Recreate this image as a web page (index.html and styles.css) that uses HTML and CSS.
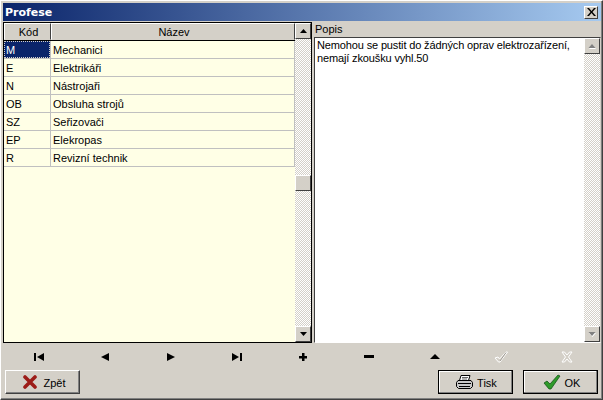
FILE: index.html
```html
<!DOCTYPE html>
<html lang="cs">
<head>
    <meta charset="UTF-8">
    <title>Profese</title>
    <link rel="stylesheet" href="styles.css">
</head>
<body>
    <div class="window">
        <div class="titlebar">
            <span class="title">Profese</span>
            <button class="close"><svg width="9" height="8" viewBox="0 0 9 8"><path d="M0 0h2l2.500 3L7 0h2L5.500 4 9 8H7L4.500 5 2 8H0l3.500-4z"/></svg></button>
        </div>

        <div class="main">
            <div class="grid">
                <div class="grid-body">
                    <div class="row head">
                        <div class="cell code">Kód</div>
                        <div class="cell name">Název</div>
                    </div>
                    <div class="row">
                        <div class="cell code selected"><span class="focus">M</span></div>
                        <div class="cell name">Mechanici</div>
                    </div>
                    <div class="row"><div class="cell code">E</div><div class="cell name">Elektrikáři</div></div>
                    <div class="row"><div class="cell code">N</div><div class="cell name">Nástrojaři</div></div>
                    <div class="row"><div class="cell code">OB</div><div class="cell name">Obsluha strojů</div></div>
                    <div class="row"><div class="cell code">SZ</div><div class="cell name">Seřizovači</div></div>
                    <div class="row"><div class="cell code">EP</div><div class="cell name">Elekropas</div></div>
                    <div class="row"><div class="cell code">R</div><div class="cell name">Revizní technik</div></div>
                </div>
                <div class="scrollbar">
                    <div class="arrow"><svg width="7" height="4" viewBox="0 0 7 4"><path d="M3.500 0L7 4H0z"/></svg></div>
                    <div class="track">
                        <div class="thumb"></div>
                    </div>
                    <div class="arrow"><svg width="7" height="4" viewBox="0 0 7 4"><path d="M0 0h7L3.500 4z"/></svg></div>
                </div>
            </div>

            <div class="memo-wrap">
                <div class="memo-label">Popis</div>
                <div class="memo">
                    <div class="memo-text">Nemohou se pustit do žádných oprav elektrozařízení,<br>nemají zkoušku vyhl.50</div>
                    <div class="scrollbar disabled">
                        <div class="arrow"><svg width="9" height="5" viewBox="0 0 9 5"><path d="M4.500 1L8 5H1z" fill="#fff"/><path d="M4 0L7.500 4H.5z"/></svg></div>
                        <div class="track"></div>
                        <div class="arrow"><svg width="9" height="5" viewBox="0 0 9 5"><path d="M1 1h7L4.500 5z" fill="#fff"/><path d="M.5 0h7L4 4z"/></svg></div>
                    </div>
                </div>
            </div>
        </div>

        <div class="navigator">
            <div class="nav"><svg width="11" height="8" viewBox="0 0 11 8"><path d="M0 0h2v8H0zM3 4l7-4v8z"/></svg></div>
            <div class="nav"><svg width="8" height="8" viewBox="0 0 8 8"><path d="M0 4l8-4v8z"/></svg></div>
            <div class="nav"><svg width="8" height="8" viewBox="0 0 8 8"><path d="M0 0l8 4-8 4z"/></svg></div>
            <div class="nav"><svg width="11" height="8" viewBox="0 0 11 8"><path d="M0 0l7 4-7 4zM8 0h2v8H8z"/></svg></div>
            <div class="nav"><svg width="8" height="8" viewBox="0 0 8 8"><path d="M3 0h2.500v3H8v2.500H5.500V8H3V5.500H0V3h3z"/></svg></div>
            <div class="nav"><svg width="10" height="3" viewBox="0 0 10 3"><path d="M0 0h10v3H0z"/></svg></div>
            <div class="nav"><svg width="10" height="5" viewBox="0 0 10 5"><path d="M5 0l5 5H0z"/></svg></div>
            <div class="nav"><svg width="14" height="12" viewBox="0 0 14 12"><path d="M1 7l3-1 1.500 2L12 1h1.500L6 11H4.500z" fill="#d4d0c8" stroke="#fff"/><path d="M12 1.500L6 10" stroke="#a09c94" fill="none"/></svg></div>
            <div class="nav"><svg width="12" height="12" viewBox="0 0 12 12"><path d="M1 1h2.500L6 4l2.500-3H11L7.500 6 11 11H8.500L6 8l-2.500 3H1l3.500-5z" fill="#d4d0c8" stroke="#fff"/></svg></div>
        </div>

        <div class="actions">
            <button class="btn back">
                <svg width="14" height="14" viewBox="0 0 14 14"><path d="M2 2l10 10M12 2L2 12" stroke="#9c1c18" stroke-width="3.600" stroke-linecap="round" fill="none"/></svg>
                <span class="btn-text">Zpět</span>
            </button>
            <div class="actions-right">
                <button class="btn dark">
                    <svg width="17" height="15" viewBox="0 0 17 15"><path d="M5 .5h9l-1.500 5h-9z" fill="#fff" stroke="#000"/><path d="M2 5.500h13l1.500 2v4l-2 2h-12l-2-2v-4z" fill="#c8c8c8" stroke="#000"/><path d="M2 8.500h13M3 11.500h11" stroke="#000"/><path d="M6 2.500h6M6 4h5" stroke="#666"/></svg>
                    <span class="btn-text">Tisk</span>
                </button>
                <button class="btn dark">
                    <svg width="18" height="16" viewBox="0 0 18 16"><path d="M1 9l3-2 3 3 8-9 2 1-9 13H6z" fill="#2f9a2a" stroke="#0c4a10" stroke-width=".7"/></svg>
                    <span class="btn-text">OK</span>
                </button>
            </div>
        </div>
    </div>
</body>
</html>
```

FILE: styles.css
```css
html, body {
    margin: 0;
    padding: 0;
}
body {
    width: 603px;
    height: 400px;
    overflow: hidden;
    font-family: "Liberation Sans", Arial, sans-serif;
    font-size: 11px;
    color: #000;
    background-color: #d4d0c8;
}
.window {
    box-sizing: border-box;
    width: 603px;
    height: 400px;
    display: flex;
    flex-direction: column;
    padding: 2px 1px 0 2px;
    border: 1px solid;
    border-color: #fff #404040 #404040 #fff;
    box-shadow: inset -1px -1px 0 #808080;
}
.titlebar {
    height: 18px;
    flex-shrink: 0;
    display: flex;
    align-items: center;
    justify-content: space-between;
    padding: 0 3px 0 2px;
    background: linear-gradient(to right, #0a246a, #a6caf0);
}
.title {
    font-family: "DejaVu Sans", Verdana, sans-serif;
    font-weight: bold;
    font-size: 11px;
    color: #fff;
}
.close {
    width: 14px;
    height: 13px;
    padding: 0;
    display: flex;
    align-items: center;
    justify-content: center;
    background-color: #d4d0c8;
    border: 1px solid;
    border-color: #fff #404040 #404040 #fff;
}
.main {
    display: flex;
    height: 321px;
    flex-shrink: 0;
    margin-top: 1px;
}
.grid {
    box-sizing: border-box;
    width: 309px;
    display: flex;
    background-color: #ffffe6;
    border: 1px solid #000;
}
.grid-body {
    flex: 1;
}
.row {
    display: flex;
    height: 18px;
    box-sizing: border-box;
    border-bottom: 1px solid #c0c0c0;
}
.cell {
    box-sizing: border-box;
    line-height: 16px;
    padding: 1px 0 0 2px;
    white-space: nowrap;
    border-right: 1px solid #c0c0c0;
}
.code {
    width: 47px;
}
.name {
    flex: 1;
}
.head {
    border-bottom: 1px solid #000;
}
.head .cell {
    text-align: center;
    background-color: #d4d0c8;
    border: 1px solid;
    border-color: #fff #404040 transparent #fff;
    padding-top: 1px;
    line-height: 15px;
}
.selected {
    color: #fff;
    background-color: #0a246a;
    padding: 0;
}
.focus {
    display: block;
    height: 17px;
    line-height: 16px;
    padding-left: 1px;
    box-sizing: border-box;
    border: 1px dotted #d4d0c8;
}
.scrollbar {
    width: 16px;
    display: flex;
    flex-direction: column;
    flex-shrink: 0;
}
.arrow {
    box-sizing: border-box;
    width: 16px;
    height: 16px;
    display: flex;
    align-items: center;
    justify-content: center;
    background-color: #d4d0c8;
    border: 1px solid;
    border-color: #fff #404040 #404040 #fff;
}
.track {
    flex: 1;
    padding-top: 136px;
    background-image: repeating-conic-gradient(#d4d0c8 0 25%, #fff 0 50%);
    background-size: 2px 2px;
}
.thumb {
    box-sizing: border-box;
    height: 16px;
    background-color: #d4d0c8;
    border: 1px solid;
    border-color: #fff #404040 #404040 #fff;
}
.memo-wrap {
    flex: 1;
    display: flex;
    flex-direction: column;
    margin-left: 2px;
}
.memo-label {
    height: 15px;
    line-height: 15px;
    padding-left: 1px;
}
.memo {
    flex: 1;
    display: flex;
    background-color: #fff;
    border: 1px solid;
    border-color: #404040 #d4d0c8 #fff #404040;
}
.memo-text {
    flex: 1;
    padding: 1px 2px;
    line-height: 13px;
    letter-spacing: -0.14px;
    white-space: nowrap;
}
.disabled svg {
    fill: #808080;
}
.disabled .track {
    padding: 0;
}
.navigator {
    display: flex;
    height: 25px;
    flex-shrink: 0;
    margin-left: 3px;
    margin-top: 1px;
}
.nav {
    width: 66px;
    display: flex;
    align-items: center;
    justify-content: center;
}
.actions {
    display: flex;
    justify-content: space-between;
    margin-top: 1px;
    padding: 0 3px 0 2px;
}
.actions-right {
    display: flex;
    gap: 10px;
}
.btn {
    box-sizing: border-box;
    width: 75px;
    height: 24px;
    padding: 0 0 0 2px;
    display: flex;
    align-items: center;
    justify-content: center;
    gap: 4px;
    font-family: "Liberation Sans", Arial, sans-serif;
    font-size: 11px;
    background-color: #d4d0c8;
    border: 1px solid;
    border-color: #fff #404040 #404040 #fff;
    box-shadow: inset -1px -1px 0 #808080;
}
.btn-text {
    padding-top: 1px;
}
.back {
    gap: 6px;
    padding-left: 4px;
}
.dark {
    outline: 1px solid #000;
    outline-offset: -1px;
    box-shadow: inset -1px -1px 0 #808080, inset 1px 1px 0 #fff;
}
```
